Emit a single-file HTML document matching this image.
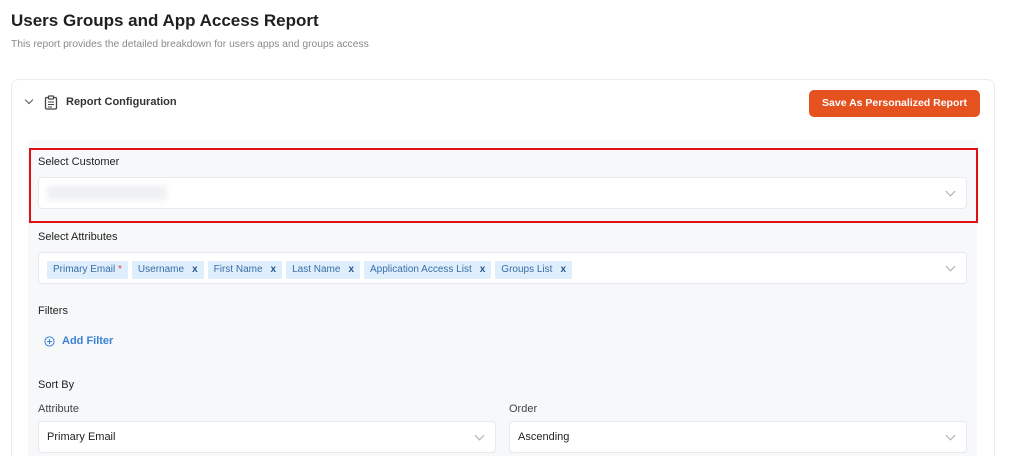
<!DOCTYPE html>
<html><head><meta charset="utf-8"><style>
*{box-sizing:border-box;margin:0;padding:0}
html,body{width:1010px;height:456px;overflow:hidden}
body{background:#fff;font-family:"Liberation Sans",sans-serif;position:relative;color:#222}
.a{position:absolute}
.t{font-size:17px;font-weight:bold;color:#1f1f1f;left:11px;top:11px}
.s{font-size:10.3px;color:#8a8a8a;left:11px;top:39px}
.card{left:11px;top:79px;width:984px;height:377px;border:1px solid #ececec;border-bottom:none;border-radius:8px 8px 0 0;background:#fff}
.panel{left:28px;top:140px;width:949px;height:316px;background:#f7f8fa;border-radius:4px 4px 0 0}
.lbl{font-size:11px;color:#222}
.box{background:#fff;border:1px solid #e8e9ec;border-radius:4px}
.chev{position:absolute;width:7px;height:7px;border-right:1.2px solid #aaa;border-bottom:1.2px solid #aaa;transform:rotate(45deg)}
.chip{display:inline-block;background:#dfeefc;color:#3a6ea8;font-size:10px;padding:0 6px;height:18px;line-height:18px;border-radius:2px;margin-right:4px}
.chip b{color:#2a5590;margin-left:8px;font-weight:bold}
.btn{left:809px;top:90px;width:171px;height:27px;background:#e5511f;color:#fff;border-radius:5px;font-size:10.5px;font-weight:bold;text-align:center;line-height:27px}
</style></head><body>
<div class="a t">Users Groups and App Access Report</div>
<div class="a s">This report provides the detailed breakdown for users apps and groups access</div>
<div class="a card"></div>
<div class="chev" style="left:26px;top:97px;width:6px;height:6px;border-color:#555"></div>
<svg class="a" style="left:44px;top:95px" width="14" height="15" viewBox="0 0 14 15"><rect x="1.5" y="2.5" width="11" height="11.5" rx="1.2" fill="none" stroke="#444" stroke-width="1.3"/><rect x="4.5" y="1" width="5" height="3" rx=".6" fill="#fff" stroke="#444" stroke-width="1.2"/><path d="M4 7h6M4 9.5h6M4 12h4" stroke="#444" stroke-width="1.1"/></svg>
<div class="a" style="left:66px;top:96px;font-size:11px;font-weight:bold;color:#333">Report Configuration</div>
<div class="a btn">Save As Personalized Report</div>
<div class="a panel"></div>
<div class="a" style="left:29px;top:148px;width:949px;height:75px;border:2px solid #e01010"></div>
<div class="a lbl" style="left:38px;top:156px">Select Customer</div>
<div class="a box" style="left:38px;top:177px;width:929px;height:32px"><div style="position:absolute;left:8px;top:8px;width:120px;height:14px;background:#eef0f3;filter:blur(3px)"></div><div class="chev" style="right:12px;top:10px"></div></div>
<div class="a lbl" style="left:38px;top:231px">Select Attributes</div>
<div class="a box" style="left:38px;top:252px;width:929px;height:32px;padding:6px 0 0 8px;white-space:nowrap"><span class="chip">Primary Email <span style="color:#e04040">*</span></span><span class="chip">Username<b>x</b></span><span class="chip">First Name<b>x</b></span><span class="chip">Last Name<b>x</b></span><span class="chip">Application Access List<b>x</b></span><span class="chip">Groups List<b>x</b></span><div class="chev" style="right:12px;top:10px"></div></div>
<div class="a lbl" style="left:38px;top:305px">Filters</div>
<svg class="a" style="left:44px;top:336px" width="11" height="11"><circle cx="5.5" cy="5.5" r="4.6" fill="none" stroke="#3b82d6" stroke-width="1"/><path d="M5.5 3v5M3 5.5h5" stroke="#3b82d6" stroke-width="1"/></svg>
<div class="a" style="left:62px;top:335px;font-size:11px;color:#3b82d6;font-weight:bold">Add Filter</div>
<div class="a lbl" style="left:38px;top:379px">Sort By</div>
<div class="a lbl" style="left:38px;top:403px;color:#444">Attribute</div>
<div class="a lbl" style="left:509px;top:403px;color:#444">Order</div>
<div class="a box" style="left:38px;top:421px;width:458px;height:32px;font-size:11px;padding:9px 8px">Primary Email<div class="chev" style="right:12px;top:10px"></div></div>
<div class="a box" style="left:509px;top:421px;width:458px;height:32px;font-size:11px;padding:9px 8px">Ascending<div class="chev" style="right:12px;top:10px"></div></div>
</body></html>
